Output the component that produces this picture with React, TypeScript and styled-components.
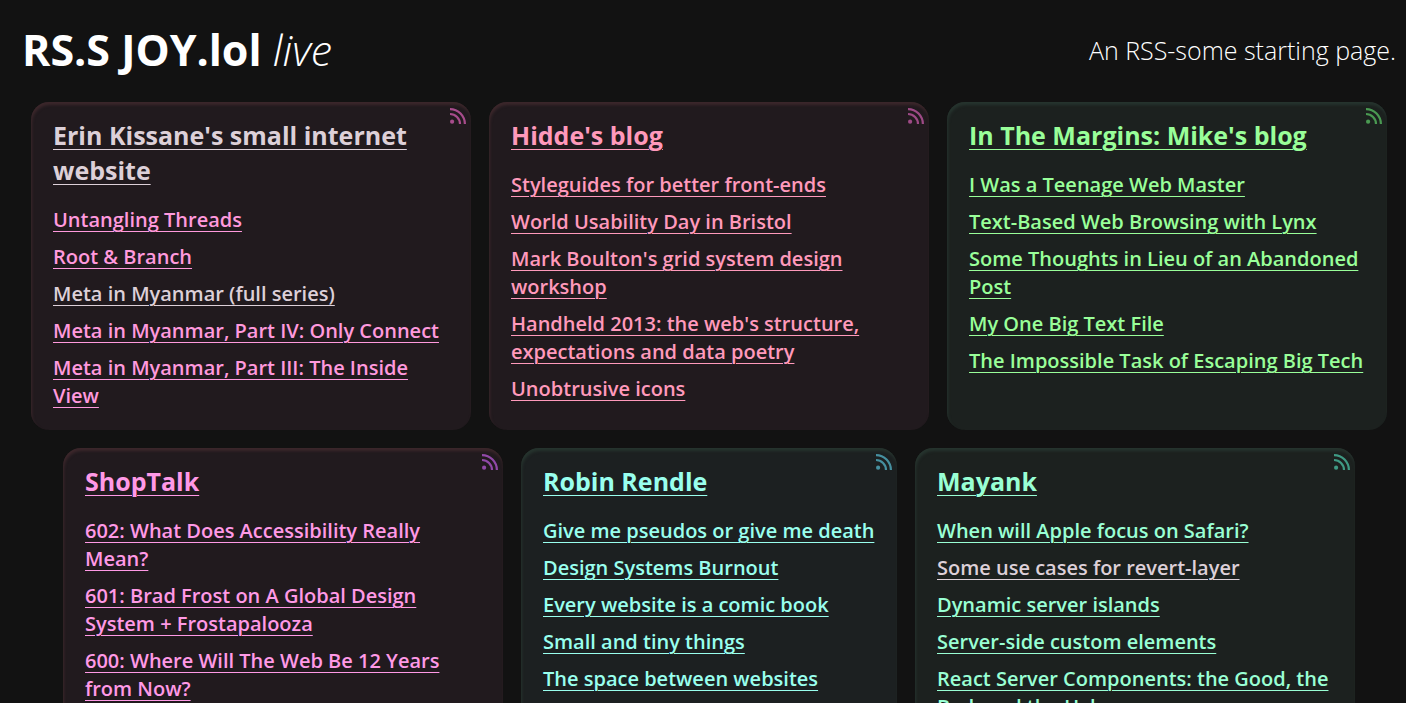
import React from "react";
import styled, { createGlobalStyle } from "styled-components";

const GlobalStyle = createGlobalStyle`
  *, *::before, *::after {
    box-sizing: border-box;
  }

  html {
    background: #121212;
  }

  body {
    margin: 0;
    color: #ffffff;
    font-family: "Open Sans", "Noto Sans", sans-serif;
  }
`;

const Page = styled.div`
  padding: 17px 10px 18px 22px;
`;

const Header = styled.header`
  display: flex;
  align-items: center;
  justify-content: space-between;
  gap: 24px;
  margin-bottom: 19px;
`;

const SiteTitle = styled.h1`
  margin: 0;
  font-size: 43px;
  line-height: 66px;
  font-weight: 700;

  em {
    font-weight: 300;
  }
`;

const Tagline = styled.p`
  margin: 0;
  font-size: 25px;
  line-height: 36px;
  font-weight: 300;
`;

const FeedList = styled.main`
  display: flex;
  flex-wrap: wrap;
  justify-content: center;
  gap: 18px;
`;

const Card = styled.article<{ $surface: string; $edge: string; $narrow?: boolean }>`
  position: relative;
  flex: 0 1 ${({ $narrow }) => ($narrow ? "376px" : "440px")};
  padding: 16px 22px 20px;
  border-radius: 18px;
  background: ${({ $surface }) => $surface};
  box-shadow: inset 1px 3px 3px ${({ $edge }) => $edge};
`;

const CardTitle = styled.h2`
  margin: 0 0 18px;
  font-size: 25px;
  line-height: 35px;
  font-weight: 700;
`;

const PostList = styled.ul`
  display: flex;
  flex-direction: column;
  gap: 9px;
  margin: 0;
  padding: 0;
  list-style: none;
  font-size: 20px;
  line-height: 28px;
  font-weight: 600;
`;

const FeedLink = styled.a<{ $color: string }>`
  color: ${({ $color }) => $color};
  text-decoration: underline;
  text-decoration-thickness: 1px;
  text-underline-offset: 4px;
`;

const RssLink = styled.a<{ $color: string }>`
  position: absolute;
  top: 6px;
  right: 5px;
  color: ${({ $color }) => $color};

  svg {
    display: block;
  }
`;

const RssIcon = () => (
  <svg width="16" height="16" viewBox="0 0 16 16" fill="none" aria-hidden="true">
    <circle cx="2.1" cy="13.7" r="2.1" fill="currentColor" />
    <path
      d="M0 6A10 10 0 0 1 10 16M0 1.1A14.9 14.9 0 0 1 14.9 16"
      stroke="currentColor"
      strokeWidth="2.2"
    />
  </svg>
);

const VISITED = "#ddd0d8";

interface Post {
  title: string;
  visited?: boolean;
}

interface Feed {
  title: string;
  color: string;
  iconColor: string;
  surface: string;
  edge: string;
  visited?: boolean;
  narrow?: boolean;
  posts: Post[];
}

const feeds: Feed[] = [
  {
    title: "Erin Kissane's small internet website",
    color: "#ff99dd",
    iconColor: "#a84c8c",
    surface: "#211a1e",
    edge: "#3c272b",
    visited: true,
    posts: [
      { title: "Untangling Threads" },
      { title: "Root & Branch" },
      { title: "Meta in Myanmar (full series)", visited: true },
      { title: "Meta in Myanmar, Part IV: Only Connect" },
      { title: "Meta in Myanmar, Part III: The Inside View" },
    ],
  },
  {
    title: "Hidde's blog",
    color: "#ff99bb",
    iconColor: "#9e4a86",
    surface: "#211a1e",
    edge: "#3c272b",
    posts: [
      { title: "Styleguides for better front-ends" },
      { title: "World Usability Day in Bristol" },
      { title: "Mark Boulton's grid system design workshop" },
      { title: "Handheld 2013: the web's structure, expectations and data poetry" },
      { title: "Unobtrusive icons" },
    ],
  },
  {
    title: "In The Margins: Mike's blog",
    color: "#99ff99",
    iconColor: "#4a9a52",
    surface: "#1c211f",
    edge: "#26342e",
    posts: [
      { title: "I Was a Teenage Web Master" },
      { title: "Text-Based Web Browsing with Lynx" },
      { title: "Some Thoughts in Lieu of an Abandoned Post" },
      { title: "My One Big Text File" },
      { title: "The Impossible Task of Escaping Big Tech" },
    ],
  },
  {
    title: "ShopTalk",
    color: "#ff99e6",
    iconColor: "#9149a8",
    surface: "#211a1e",
    edge: "#3c272b",
    posts: [
      { title: "602: What Does Accessibility Really Mean?" },
      { title: "601: Brad Frost on A Global Design System + Frostapalooza" },
      { title: "600: Where Will The Web Be 12 Years from Now?" },
      { title: "599: Feeds, Readers & Blogging" },
      { title: "598: Questions and Answers" },
    ],
  },
  {
    title: "Robin Rendle",
    color: "#99ffee",
    iconColor: "#4690a0",
    surface: "#1c2021",
    edge: "#26342e",
    narrow: true,
    posts: [
      { title: "Give me pseudos or give me death" },
      { title: "Design Systems Burnout" },
      { title: "Every website is a comic book" },
      { title: "Small and tiny things" },
      { title: "The space between websites" },
    ],
  },
  {
    title: "Mayank",
    color: "#99ffd4",
    iconColor: "#3f9a84",
    surface: "#1c211f",
    edge: "#26342e",
    posts: [
      { title: "When will Apple focus on Safari?" },
      { title: "Some use cases for revert-layer", visited: true },
      { title: "Dynamic server islands" },
      { title: "Server-side custom elements" },
      { title: "React Server Components: the Good, the Bad, and the Ugly" },
    ],
  },
];

export default function App() {
  return (
    <>
      <GlobalStyle />
      <Page>
        <Header>
          <SiteTitle>
            RS.S JOY.lol <em>live</em>
          </SiteTitle>
          <Tagline>An RSS-some starting page.</Tagline>
        </Header>
        <FeedList>
          {feeds.map((feed) => (
            <Card key={feed.title} $surface={feed.surface} $edge={feed.edge} $narrow={feed.narrow}>
              <CardTitle>
                <FeedLink href="#" $color={feed.visited ? VISITED : feed.color}>
                  {feed.title}
                </FeedLink>
              </CardTitle>
              <PostList>
                {feed.posts.map((post) => (
                  <li key={post.title}>
                    <FeedLink href="#" $color={post.visited ? VISITED : feed.color}>
                      {post.title}
                    </FeedLink>
                  </li>
                ))}
              </PostList>
              <RssLink href="#" $color={feed.iconColor} aria-label={`${feed.title} RSS feed`}>
                <RssIcon />
              </RssLink>
            </Card>
          ))}
        </FeedList>
      </Page>
    </>
  );
}
